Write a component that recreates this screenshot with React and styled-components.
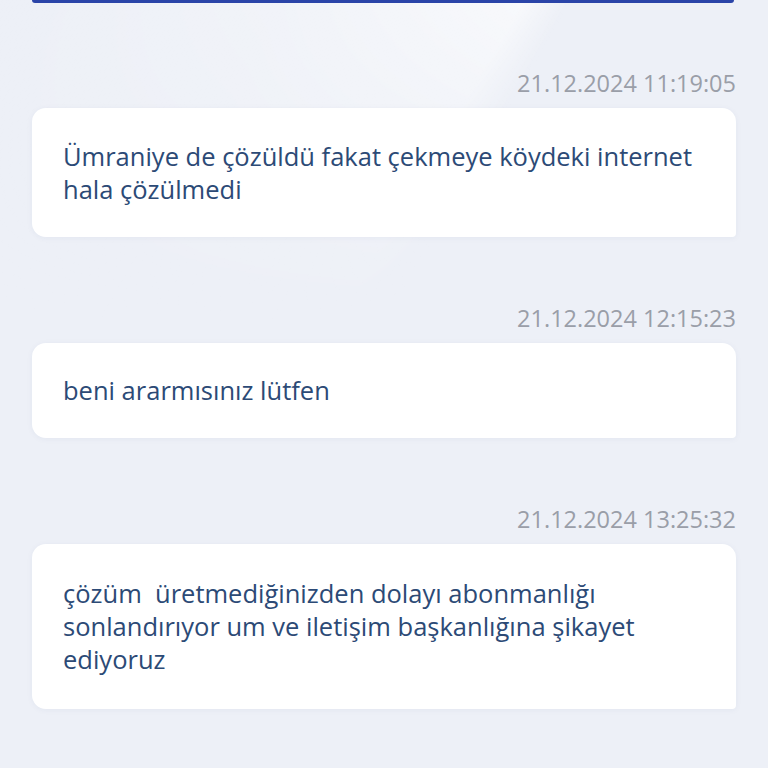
import React from "react";
import styled, { createGlobalStyle } from "styled-components";

const Global = createGlobalStyle`
  html, body { margin: 0; padding: 0; }
  body {
    background: #edf0f7;
    font-family: "Open Sans", "Noto Sans", sans-serif;
    -webkit-font-smoothing: antialiased;
  }
`;

const Page = styled.div`
  position: relative;
  width: 768px;
  height: 768px;
  overflow: hidden;
  background: #edf0f7;
  display: flex;
  flex-direction: column;
  padding: 0 32px;
  box-sizing: border-box;

  &::before {
    content: "";
    position: absolute;
    left: 0;
    top: 0;
    width: 768px;
    height: 320px;
    background: linear-gradient(
      120deg,
      rgba(255, 255, 255, 0) 0%,
      rgba(255, 255, 255, 0.25) 30%,
      rgba(255, 255, 255, 0.6) 55%,
      rgba(255, 255, 255, 0) 60%
    );
    -webkit-mask-image: linear-gradient(to bottom, #000 0%, rgba(0,0,0,0.5) 40%, transparent 100%);
    mask-image: linear-gradient(to bottom, #000 0%, rgba(0,0,0,0.5) 40%, transparent 100%);
    pointer-events: none;
  }
`;

const TopBar = styled.div`
  position: relative;
  height: 3px;
  margin-right: 2px;
  background: #2a44a8;
  border-radius: 0 0 10px 10px;
  flex-shrink: 0;
`;

const Feed = styled.div`
  position: relative;
  display: flex;
  flex-direction: column;
  padding-top: 65px;
  gap: 66px;
`;

const Message = styled.div`
  display: flex;
  flex-direction: column;
`;

const Stamp = styled.div`
  align-self: flex-end;
  height: 30px;
  line-height: 30px;
  font-size: 23.5px;
  color: #9a9ea8;
  margin-bottom: 10px;
`;

const Bubble = styled.div`
  background: #ffffff;
  border-radius: 14px 14px 4px 14px;
  padding: ${(p) => p.$pad}px 40px ${(p) => p.$pad}px 31px;
  box-shadow: 0 1px 6px rgba(40, 60, 110, 0.05);
`;

const Text = styled.div`
  font-size: 25.5px;
  line-height: 33px;
  color: #2c4a76;
  white-space: pre-wrap;
`;

const messages = [
  {
    stamp: "21.12.2024 11:19:05",
    text: "Ümraniye de çözüldü fakat çekmeye köydeki internet\nhala çözülmedi",
    pad: 31.5,
  },
  { stamp: "21.12.2024 12:15:23", text: "beni ararmısınız lütfen", pad: 31 },
  {
    stamp: "21.12.2024 13:25:32",
    text: "çözüm  üretmediğinizden dolayı abonmanlığı\nsonlandırıyor um ve iletişim başkanlığına şikayet\nediyoruz",
    pad: 33,
  },
];

export default function App() {
  return (
    <>
      <Global />
      <Page>
        <TopBar />
        <Feed>
          {messages.map((m) => (
            <Message key={m.stamp}>
              <Stamp>{m.stamp}</Stamp>
              <Bubble $pad={m.pad}>
                <Text>{m.text}</Text>
              </Bubble>
            </Message>
          ))}
        </Feed>
      </Page>
    </>
  );
}
